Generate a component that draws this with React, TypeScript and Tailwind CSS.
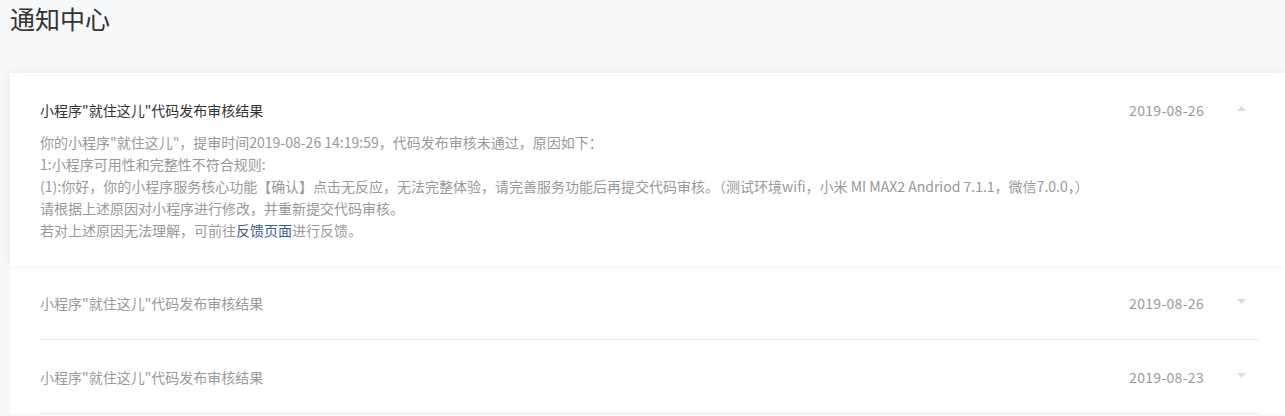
import React from 'react'

const font = { fontFamily: '"Noto Sans CJK SC", "Noto Sans", sans-serif' }

const Arrow = ({ up }: { up: boolean }) => (
  <svg width="9" height="5" viewBox="0 0 9 5" className="shrink-0">
    {up ? <path d="M0 5 L4.5 0 L9 5 Z" fill="#dcdcdc" /> : <path d="M0 0 L4.5 5 L9 0 Z" fill="#dcdcdc" />}
  </svg>
)

const Header = ({ title, date, open }: { title: string; date: string; open: boolean }) => (
  <div className="flex items-center h-[22px] pr-[13px]">
    <div className={`flex-1 text-[14px] ${open ? 'text-[#333]' : 'text-[#999]'}`}>{title}</div>
    <div className="text-[14px] tracking-[0.3px] text-[#999]">{date}</div>
    <div className="w-[42px] flex justify-end mt-[-4px]">
      <Arrow up={open} />
    </div>
  </div>
)

const items = [
  { title: '小程序"就住这儿"代码发布审核结果', date: '2019-08-26' },
  { title: '小程序"就住这儿"代码发布审核结果', date: '2019-08-23' },
]

const App = () => {
  return (
    <div className="min-h-screen bg-[#f7f8fa] overflow-hidden" style={font}>
      <div className="h-[73px] pl-[10px] pt-[1px]">
        <h1 className="text-[25px] leading-[34px] text-[#333] font-normal">通知中心</h1>
      </div>
      <div className="ml-[10px] bg-white">
        <div className="pl-[30px] pr-[26px] pt-[26px] pb-[25px] bg-white shadow-[0_0_10px_rgba(0,0,0,0.08)] relative">
          <Header title={'小程序"就住这儿"代码发布审核结果'} date="2019-08-26" open />
          <div className="mt-[10px] text-[14px] leading-[22px] text-[#999]">
            <p>你的小程序"就住这儿"，提审时间2019-08-26 14:19:59，代码发布审核未通过，原因如下：</p>
            <p>1:小程序可用性和完整性不符合规则:</p>
            <p>(1):你好，你的小程序服务核心功能【确认】点击无反应，无法完整体验，请完善服务功能后再提交代码审核。（测试环境wifi，小米 MI MAX2 Andriod 7.1.1，微信7.0.0，）</p>
            <p>请根据上述原因对小程序进行修改，并重新提交代码审核。</p>
            <p>
              若对上述原因无法理解，可前往<span className="text-[#3b5998]">反馈页面</span>进行反馈。
            </p>
          </div>
        </div>
        {items.map((it, i) => (
          <div key={i} className="ml-[30px] mr-[26px] pt-[26px] pb-[25px] border-b border-[#e8e8e8]">
            <Header title={it.title} date={it.date} open={false} />
          </div>
        ))}
      </div>
    </div>
  )
}

export default App
